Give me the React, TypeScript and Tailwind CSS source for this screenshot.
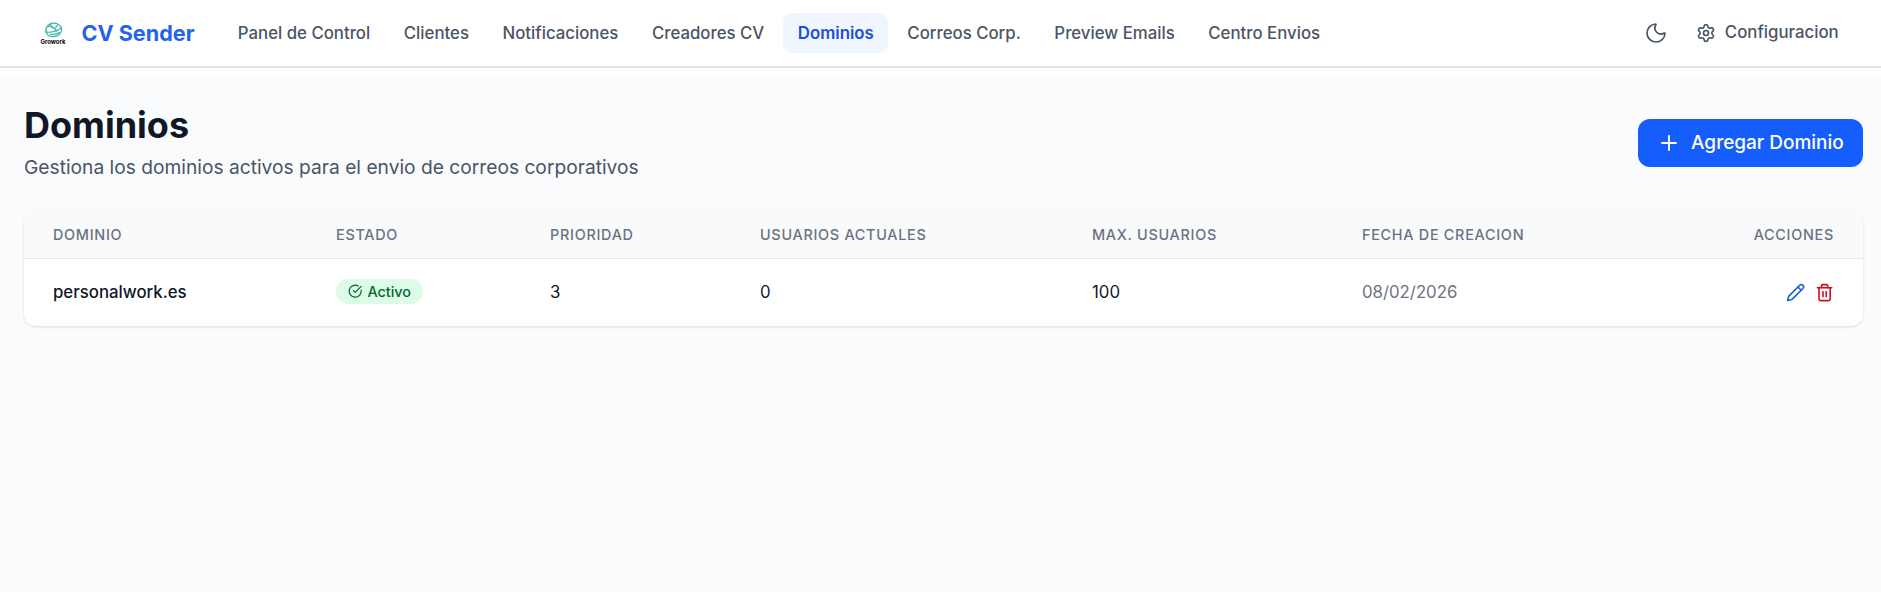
import { CircleCheckBig, Moon, Pencil, Plus, Settings, Trash2 } from "lucide-react";

const navItems = [
  "Panel de Control",
  "Clientes",
  "Notificaciones",
  "Creadores CV",
  "Dominios",
  "Correos Corp.",
  "Preview Emails",
  "Centro Envios",
];

function Logo() {
  return (
    <div className="w-[40px] flex flex-col items-center">
      <svg viewBox="0 0 24 20" className="w-[21px] h-[16px]" fill="none" stroke="#3cb8ac" strokeWidth="1.5">
        <path d="M3 13C1 8 5 2 12 1.500C18 1 23 6 22 11C21 16 15 19 9 18C6 17.500 4 16 3 13Z" />
        <path d="M1 12c6 2 15 0 22-5" />
        <path d="M4 6c5-2 10 1 12 6" />
        <path d="M9 2c-1 2 0 4 3 6" />
        <path d="M17 3c0 2-1 3-3 4" />
        <path d="M7 15c4 1 9 0 13-2" />
      </svg>
      <span className="text-[6px] leading-[7px] font-bold text-black">Growork</span>
    </div>
  );
}

export default function App() {
  return (
    <div className="min-h-screen bg-[#f9fbfd] font-['Inter',sans-serif]">
      {/* Navbar */}
      <header className="h-[66px] bg-white shadow-[0_2px_0_#e4e4e4,0_10px_0_#fdfefe] flex items-center pl-[33px] pr-[28px]">
        <Logo />
        <span className="ml-[8.5px] text-[21.6px] font-bold text-[#2563eb]">CV Sender</span>
        <nav className="ml-[29px] flex items-center gap-[4.8px]">
          {navItems.map((item) =>
            item === "Dominios" ? (
              <a key={item} className="px-[14.4px] py-[8px] rounded-[9.6px] bg-[#eff6ff] text-[#1d4ed8] font-semibold text-[16.8px] leading-6">
                {item}
              </a>
            ) : (
              <a key={item} className="px-[14.4px] py-[8px] rounded-[9.6px] text-[#4a5565] font-medium text-[16.8px] leading-6">
                {item}
              </a>
            )
          )}
        </nav>
        <div className="ml-auto flex items-center gap-[13.5px] text-[#4a5565]">
          <Moon className="w-[24px] h-[24px]" strokeWidth={1.7} />
          <div className="flex items-center gap-[9px] px-[14.4px]">
            <Settings className="w-[20px] h-[20px]" />
            <span className="font-medium text-[16.8px]">Configuracion</span>
          </div>
        </div>
      </header>

      {/* Content */}
      <main className="pl-[24px] pr-[18px]">
        <div className="flex items-center justify-between pt-[38.4px] pb-[30.6px]">
          <div>
            <h1 className="text-4xl leading-[43.2px] font-bold text-[#101828]">Dominios</h1>
            <p className="mt-[5.4px] text-[19.2px] leading-[28.8px] text-[#4a5565]">
              Gestiona los dominios activos para el envio de correos corporativos
            </p>
          </div>
          <button className="h-[48px] px-[19.2px] flex items-center gap-[9.6px] rounded-xl bg-[#155dfc] text-white text-[19px] font-medium">
            <Plus className="w-[24px] h-[24px]" />
            Agregar Dominio
          </button>
        </div>

        <div className="bg-white rounded-xl shadow-[0_1px_3px_rgba(0,0,0,0.12)] overflow-hidden">
          <table className="w-full table-fixed text-left">
            <thead className="bg-[#f9fafc] border-b border-[#e5e7eb]">
              <tr className="h-[46px] text-[14.4px] text-[#6a7282] uppercase tracking-wider">
                <th className="w-[283px] pl-[29px] font-medium">Dominio</th>
                <th className="w-[214px] pl-[29px] font-medium">Estado</th>
                <th className="w-[210px] pl-[29px] font-medium">Prioridad</th>
                <th className="w-[332px] pl-[29px] font-medium">Usuarios Actuales</th>
                <th className="w-[270px] pl-[29px] font-medium">Max. Usuarios</th>
                <th className="pl-[29px] font-medium">Fecha de Creacion</th>
                <th className="w-[200px] pr-[29px] font-medium text-right">Acciones</th>
              </tr>
            </thead>
            <tbody>
              <tr className="h-[67.5px] text-[16.8px] text-[#101828]">
                <td className="pl-[29px] font-medium">personalwork.es</td>
                <td className="pl-[29px]">
                  <span className="inline-flex items-center gap-[5.5px] h-[25px] px-[11.5px] rounded-full bg-[#dcfce7] text-[#016630] text-[14.4px] font-medium">
                    <CircleCheckBig className="w-[14.4px] h-[14.4px]" />
                    Activo
                  </span>
                </td>
                <td className="pl-[29px]">3</td>
                <td className="pl-[29px]">0</td>
                <td className="pl-[29px]">100</td>
                <td className="pl-[29px] text-[#6a7282]">08/02/2026</td>
                <td className="pr-[29px]">
                  <div className="flex items-center justify-end gap-[9.6px]">
                    <Pencil className="w-[19.2px] h-[19.2px] text-[#1d5ed8]" />
                    <Trash2 className="w-[19.2px] h-[19.2px] text-[#d50a1e]" />
                  </div>
                </td>
              </tr>
            </tbody>
          </table>
        </div>
      </main>
    </div>
  );
}
